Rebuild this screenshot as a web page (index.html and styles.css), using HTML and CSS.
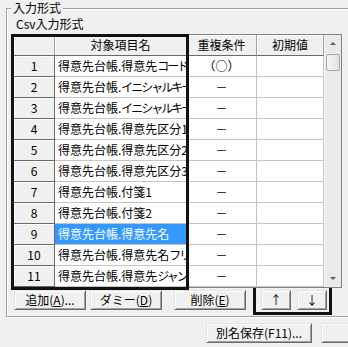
FILE: index.html
```html
<!DOCTYPE html>
<html lang="ja">
<head>
    <meta charset="UTF-8">
    <title>入力形式</title>
    <link rel="stylesheet" href="styles.css">
</head>
<body>
    <fieldset class="group">
        <legend>入力形式</legend>
        <div class="caption">Csv入力形式</div>

        <div class="grid-wrap">
            <div class="grid">
                <table class="grid-table">
                    <thead>
                        <tr>
                            <th class="c-no"></th>
                            <th class="c-name">対象項目名</th>
                            <th class="c-dup">重複条件</th>
                            <th class="c-init">初期値</th>
                        </tr>
                    </thead>
                    <tbody>
                        <tr><td class="no">1</td><td class="name">得意先台帳.得意先<span class="kana">コード</span></td><td class="dup">（○）</td><td></td></tr>
                        <tr><td class="no">2</td><td class="name">得意先台帳.<span class="kana">イニシャルキー</span></td><td class="dup">－</td><td></td></tr>
                        <tr><td class="no">3</td><td class="name">得意先台帳.<span class="kana">イニシャルキー</span></td><td class="dup">－</td><td></td></tr>
                        <tr><td class="no">4</td><td class="name">得意先台帳.得意先区分1</td><td class="dup">－</td><td></td></tr>
                        <tr><td class="no">5</td><td class="name">得意先台帳.得意先区分2</td><td class="dup">－</td><td></td></tr>
                        <tr><td class="no">6</td><td class="name">得意先台帳.得意先区分3</td><td class="dup">－</td><td></td></tr>
                        <tr><td class="no">7</td><td class="name">得意先台帳.付箋1</td><td class="dup">－</td><td></td></tr>
                        <tr><td class="no">8</td><td class="name">得意先台帳.付箋2</td><td class="dup">－</td><td></td></tr>
                        <tr><td class="no">9</td><td class="name sel">得意先台帳.得意先名</td><td class="dup">－</td><td></td></tr>
                        <tr><td class="no">10</td><td class="name">得意先台帳.得意先名<span class="kana">フリガナ</span></td><td class="dup">－</td><td></td></tr>
                        <tr><td class="no">11</td><td class="name">得意先台帳.得意先<span class="kana">ジャンル</span></td><td class="dup">－</td><td></td></tr>
                    </tbody>
                </table>
                <!-- 縦スクロールバー -->
                <div class="vscroll">
                    <div class="sb-btn"><span class="tri up"></span></div>
                    <div class="thumb"></div>
                    <div class="track"></div>
                    <div class="sb-btn"><span class="tri down"></span></div>
                </div>
            </div>
            <div class="mark"></div> <!-- 強調枠 -->
        </div>

        <div class="actions">
            <button class="btn">追加(<u>A</u>)...</button>
            <button class="btn btn-gap">ダミー(<u>D</u>)</button>
            <button class="btn btn-del">削除(<u>E</u>)</button>
            <div class="move-box">
                <button class="btn btn-arrow">↑</button>
                <button class="btn btn-arrow">↓</button>
            </div>
        </div>
    </fieldset>

    <div class="footer">
        <button class="btn btn-save">別名保存(F11)...</button>
        <button class="btn btn-next"></button>
    </div>
</body>
</html>
```

FILE: styles.css
```css
body {
    margin: 0;
    width: 348px;
    height: 347px;
    overflow: hidden;
    background-color: #f0f0f0;
    color: #000;
    font-family: "Noto Sans CJK JP", "Noto Sans", sans-serif;
    font-size: 12px;
}

.group {
    margin: 0 0 0 6px;
    padding: 0 0 1px 4px;
    width: 380px; /* 右端は画面外へ */
    border: 1px solid #a0a0a0;
    box-shadow: inset 1px 1px 0 #fff, 1px 1px 0 #fff;
}

.group legend {
    padding: 0 2px;
    line-height: 16px;
    height: 16px;
    background-color: #f0f0f0;
}

.caption {
    margin-left: 5px;
    line-height: 16px;
    height: 16px;
}

.grid-wrap {
    position: relative;
    width: 333px;
}

.grid {
    display: flex;
    margin: 2px 0 0 2px;
    width: 329px;
    border: 1px solid #828282;
    box-sizing: border-box;
    background-color: #fff;
}

.grid-table {
    table-layout: fixed;
    border-collapse: separate;
    border-spacing: 0;
    width: 310px;
}

.grid-table th,
.grid-table td {
    box-sizing: border-box;
    height: 21px;
    padding: 0;
    line-height: 20px;
    white-space: nowrap;
    overflow: hidden;
    border-right: 1px solid #c4c4c4;
    border-bottom: 1px solid #c4c4c4;
}

.grid-table th {
    background-color: #f0f0f0;
    font-weight: normal;
    text-align: center;
    border-right-color: #a0a0a0;
    border-bottom-color: #696969;
    box-shadow: inset 1px 1px 0 #fff;
}

.c-no { width: 41px; }
.c-name { width: 132px; }
.c-dup { width: 70px; }
.c-init { width: 67px; }

.grid-table td.no {
    background-color: #f0f0f0;
    text-align: center;
    border-right-color: #696969;
    border-bottom-color: #696969;
    box-shadow: inset 1px 1px 0 #fff;
}

.grid-table td.name {
    padding-left: 3px;
    text-overflow: clip;
}

/* カナは少し詰める */
.kana {
    letter-spacing: -2px;
}

.grid-table td.sel {
    background-color: #3399ff;
    color: #fff;
}

.grid-table td.dup {
    text-align: center;
}

.vscroll {
    display: flex;
    flex-direction: column;
    width: 17px;
    background-color: #eaeaea;
    border-left: 1px solid #f7f7f7;
    box-sizing: border-box;
}

.sb-btn {
    display: flex;
    align-items: center;
    justify-content: center;
    height: 17px;
}

.tri {
    width: 0;
    height: 0;
    border-left: 3px solid transparent;
    border-right: 3px solid transparent;
}

.tri.up { border-bottom: 3px solid #5a5a5a; }
.tri.down { border-top: 3px solid #5a5a5a; }

.thumb {
    margin: 2px 1px 0 1px;
    height: 15px;
    border: 1px solid #a8a8a8;
    border-radius: 2px;
    background: linear-gradient(90deg, #f4f4f4, #e2e2e2);
}

.track {
    flex-grow: 1;
}

.mark {
    position: absolute;
    top: 0;
    left: 0;
    width: 178px;
    height: 256px;
    border: 3px solid #111;
    box-sizing: border-box;
    pointer-events: none;
}

.actions {
    display: flex;
    align-items: flex-start;
    padding-left: 3px;
}

.btn {
    height: 20px;
    width: 72px;
    padding: 0;
    font-family: "Noto Sans CJK JP", "Noto Sans", sans-serif;
    font-size: 12px;
    line-height: 18px;
    color: #000;
    background-color: #f0f0f0;
    border: 1px solid;
    border-color: #e3e3e3 #696969 #696969 #e3e3e3;
    box-shadow: inset 1px 1px 0 #fff, inset -1px -1px 0 #a0a0a0;
    box-sizing: border-box;
    flex-shrink: 0;
}

.actions > .btn {
    margin-top: 2px;
}

.btn-gap { margin-left: 4px; }
.btn-del { margin-left: 12px; }

.move-box {
    display: flex;
    gap: 6px;
    margin: -3px 0 0 7px;
    padding: 2px 2px 2px 5px;
    border: 3px solid #111;
}

.btn-arrow {
    width: 30px;
}

.footer {
    display: flex;
    gap: 9px;
    margin-top: 6px;
    padding-left: 206px;
}

.btn-save {
    width: 106px;
}

.btn-next {
    width: 80px;
}
```
